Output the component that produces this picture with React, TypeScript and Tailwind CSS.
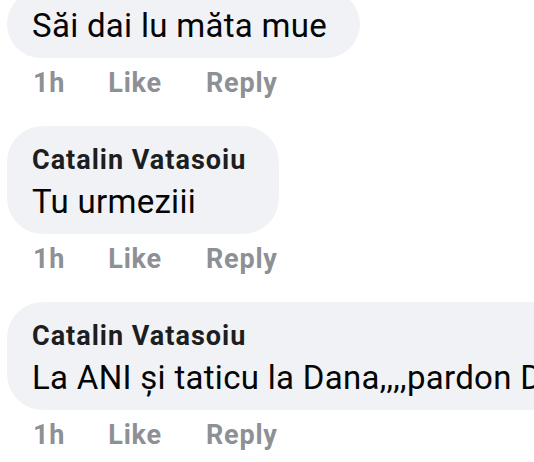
const comments = [
  { name: "", text: "Săi dai lu măta mue" },
  { name: "Catalin Vatasoiu", text: "Tu urmeziii" },
  { name: "Catalin Vatasoiu", text: "La ANI și taticu la Dana,,,,pardon Dana" },
];

const Comment = ({ name, text, first }: { name: string; text: string; first?: boolean }) => (
  <div className={first ? "-mt-[10px]" : "mt-[25px]"}>
    <div className="flex">
      <div className="bg-[#f0f2f5] rounded-[36px] pl-[25px] pr-[33px] pt-[14px] pb-[10px] whitespace-nowrap">
        {name && (
          <div className="text-[27px] leading-[40px] font-bold tracking-[1px] text-[#1c1e21]">{name}</div>
        )}
        <div className="text-[33px] leading-[44px] tracking-[0.3px] text-[#050505]">{text}</div>
      </div>
    </div>
    <div className="flex pl-[26px] pt-[7px] text-[27px] leading-[36px] font-bold tracking-[0.8px] text-[#8d9095]">
      <span>1h</span>
      <span className="ml-[43px]">Like</span>
      <span className="ml-[44px]">Reply</span>
    </div>
  </div>
);

export default function App() {
  return (
    <div className="w-[534px] h-[462px] overflow-hidden bg-white pl-[7px]" style={{ fontFamily: "Roboto, 'Noto Sans', sans-serif" }}>
      {comments.map((c, i) => (
        <Comment key={i} name={c.name} text={c.text} first={i === 0} />
      ))}
    </div>
  );
}
